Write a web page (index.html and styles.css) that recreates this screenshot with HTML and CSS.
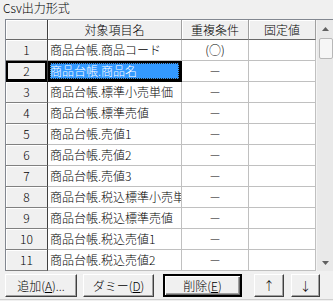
FILE: index.html
```html
<!DOCTYPE html>
<html lang="ja">
  <head>
    <meta charset="UTF-8" />
    <title>Csv出力形式</title>
    <link rel="stylesheet" href="styles.css">
  </head>
  <body>
    <div class="panel">
      <div class="caption">Csv出力形式</div>
      <div class="grid-box">
        <div class="grid">
          <div class="hcell corner"></div>
          <div class="hcell">対象項目名</div>
          <div class="hcell">重複条件</div>
          <div class="hcell">固定値</div>

          <div class="rhead">1</div>
          <div class="cell name">商品台帳.商品コード</div>
          <div class="cell mid">(○)</div>
          <div class="cell"></div>

          <div class="rhead current">2</div>
          <div class="cell name selected"><span class="focus">商品台帳.商品名</span></div>
          <div class="cell mid">－</div>
          <div class="cell"></div>

          <div class="rhead">3</div>
          <div class="cell name">商品台帳.標準小売単価（税抜）</div>
          <div class="cell mid">－</div>
          <div class="cell"></div>

          <div class="rhead">4</div>
          <div class="cell name">商品台帳.標準売値</div>
          <div class="cell mid">－</div>
          <div class="cell"></div>

          <div class="rhead">5</div>
          <div class="cell name">商品台帳.売値1</div>
          <div class="cell mid">－</div>
          <div class="cell"></div>

          <div class="rhead">6</div>
          <div class="cell name">商品台帳.売値2</div>
          <div class="cell mid">－</div>
          <div class="cell"></div>

          <div class="rhead">7</div>
          <div class="cell name">商品台帳.売値3</div>
          <div class="cell mid">－</div>
          <div class="cell"></div>

          <div class="rhead">8</div>
          <div class="cell name">商品台帳.税込標準小売単価</div>
          <div class="cell mid">－</div>
          <div class="cell"></div>

          <div class="rhead">9</div>
          <div class="cell name">商品台帳.税込標準売値</div>
          <div class="cell mid">－</div>
          <div class="cell"></div>

          <div class="rhead">10</div>
          <div class="cell name">商品台帳.税込売値1</div>
          <div class="cell mid">－</div>
          <div class="cell"></div>

          <div class="rhead">11</div>
          <div class="cell name">商品台帳.税込売値2</div>
          <div class="cell mid">－</div>
          <div class="cell"></div>
        </div>
        <div class="vscroll">
          <div class="sbtn">
            <svg width="7" height="4" viewBox="0 0 7 4"><path d="M0 4 L3.5 0 L7 4 Z" fill="#606060"/></svg>
          </div>
          <div class="track"><div class="thumb"></div></div>
          <div class="sbtn">
            <svg width="7" height="4" viewBox="0 0 7 4"><path d="M0 0 L3.5 4 L7 0 Z" fill="#606060"/></svg>
          </div>
        </div>
      </div>
      <div class="buttons">
        <button class="btn add">追加(<u>A</u>)...</button>
        <button class="btn dummy">ダミー(<u>D</u>)</button>
        <button class="btn del default">削除(<u>E</u>)</button>
        <button class="btn up">↑</button>
        <button class="btn down">↓</button>
      </div>
    </div>
  </body>
</html>
```

FILE: styles.css
```css
body {
  margin: 0;
  background-color: #f0f0f0;
  font-family: "Noto Sans CJK JP", "DejaVu Sans", sans-serif;
  font-size: 12px;
  font-weight: 300;
  color: #000;
  overflow: hidden;
}

.panel {
  height: 299px;
  border-bottom: 1px solid #d0d0d0;
}

.caption {
  height: 19px;
  line-height: 16px;
  padding-left: 3px;
}

.grid-box {
  display: flex;
  margin-left: 5px;
  width: 340px;
  height: 251px;
  border-top: 1px solid #828790;
  border-left: 1px solid #828790;
  background: #fff;
}

.grid {
  display: grid;
  grid-template-columns: 42px 134px 67px 67px;
  grid-template-rows: 20px;
  grid-auto-rows: 21px;
  align-content: start;
}

.grid > div {
  box-sizing: border-box;
  white-space: nowrap;
  overflow: hidden;
}

.hcell {
  background: #f0f0f0;
  border-right: 1px solid #a0a0a0;
  border-bottom: 1px solid #696969;
  box-shadow: inset 1px 1px #fff;
  text-align: center;
  line-height: 19px;
}

.hcell.corner {
  border-right-color: #404040;
}

.rhead {
  background: #f0f0f0;
  border-right: 1px solid #404040;
  border-bottom: 1px solid #808080;
  box-shadow: inset 1px 1px #fff;
  text-align: center;
  line-height: 20px;
}

.rhead.current {
  box-shadow: inset 0 0 0 2px #000;
  border-bottom-color: #000;
}

.cell {
  border-right: 1px solid #c0c0c0;
  border-bottom: 1px solid #c0c0c0;
  line-height: 20px;
}

.cell.name {
  padding-left: 2px;
}

.cell.mid {
  text-align: center;
}

.cell.selected {
  background: #3399ff;
  color: #fff;
  padding: 0;
  border-right-color: #000;
  border-bottom-color: #000;
  box-shadow: inset 0 0 0 2px #000;
}

.focus {
  display: block;
  margin: 2px;
  height: 16px;
  line-height: 16px;
  outline: 1px dotted #202020;
  outline-offset: -1px;
}

.vscroll {
  width: 17px;
  height: 251px;
  display: flex;
  flex-direction: column;
  background: #e9e9e9;
  border-left: 1px solid #f4f4f4;
}

.sbtn {
  height: 17px;
  display: flex;
  align-items: center;
  justify-content: center;
}

.track {
  flex: 1;
  padding-top: 1px;
}

.thumb {
  margin: 0 1px 0 2px;
  height: 19px;
  background: #f6f6f6;
  border: 1px solid #b8b8b8;
  border-radius: 2px;
}

.buttons {
  display: flex;
  padding: 3px 0 0 5px;
}

.btn {
  box-sizing: border-box;
  height: 23px;
  padding: 0;
  font-family: inherit;
  font-size: 12px;
  font-weight: 300;
  color: #000;
  background: #f0f0f0;
  border: 1px solid;
  border-color: #fff #404040 #404040 #fff;
  box-shadow: inset -1px -1px #a0a0a0;
}

.btn.add {
  width: 72px;
}

.btn.dummy {
  width: 71px;
  margin-left: 6px;
}

.btn.del {
  width: 79px;
  margin-left: 9px;
}

.btn.default {
  border: 2px solid #000;
  box-shadow: inset 1px 1px #fff, inset -1px -1px #696969, inset -2px -2px #a0a0a0;
}

.btn.up {
  width: 30px;
  margin-left: 12px;
}

.btn.down {
  width: 29px;
  margin-left: 7px;
}
```
